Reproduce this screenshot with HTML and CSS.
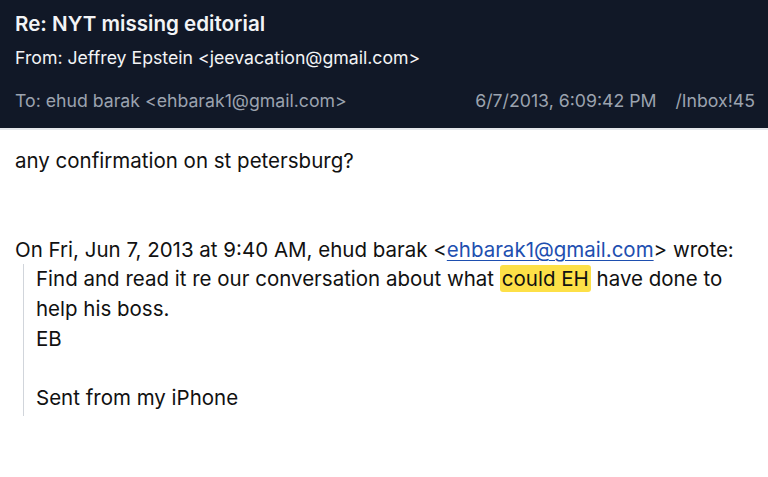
FILE: index.html
```html
<!DOCTYPE html>
<html>
<head>
<meta charset="utf-8">
<link rel="stylesheet" href="styles.css">
</head>
<body>
<header class="head">
  <div class="subject">Re: NYT missing editorial</div>
  <div class="from">From: Jeffrey Epstein &lt;jeevacation@gmail.com&gt;</div>
  <div class="meta">
    <span class="to">To: ehud barak &lt;ehbarak1@gmail.com&gt;</span>
    <span class="right"><span class="date">6/7/2013, 6:09:42 PM</span><span class="folder">/Inbox!45</span></span>
  </div>
</header>
<main class="body">
  <div class="line">any confirmation on st petersburg?</div>
  <div class="line">&nbsp;</div>
  <div class="line">&nbsp;</div>
  <div class="line">On Fri, Jun 7, 2013 at 9:40 AM, ehud barak &lt;<a class="link" href="#">ehbarak1@gmail.com</a>&gt; wrote:</div>
  <blockquote class="quote">
    <div class="line">Find and read it re our conversation about what <mark class="hl">could EH</mark> have done to help his boss.</div>
    <div class="line">EB</div>
    <div class="line">&nbsp;</div>
    <div class="line">Sent from my iPhone</div>
  </blockquote>
</main>
</body>
</html>
```
FILE: styles.css
```css
html, body { margin: 0; padding: 0; background: #fff; }
body { font-family: Inter, "Liberation Sans", Arial, sans-serif; }
.head {
  background: #111827;
  color: #f3f4f6;
  padding: 10px 13px 12px 15px;
  height: 106px;
  border-bottom: 2px solid #e5e7eb;
}
.subject { font-size: 20.6px; font-weight: 600; line-height: 28px; }
.from { font-size: 17.7px; line-height: 24px; margin-top: 8px; }
.meta {
  display: flex;
  justify-content: space-between;
  font-size: 17.7px;
  line-height: 24px;
  color: #9ca3af;
  margin-top: 19px;
}
.date { margin-right: 19px; }
.body { padding: 16px 15px; color: #111; font-size: 20.5px; line-height: 29.6px; }
.quote {
  margin: 0 0 0 8px;
  padding-left: 12px;
  border-left: 1px solid #d1d5db;
  padding-bottom: 4px;
}
.link { color: #1e4fb0; text-decoration: underline; text-decoration-thickness: 1px; text-underline-offset: 3px; }
.hl { background: #fde047; color: #111; border-radius: 3px; padding: 1px 2px; }
```
